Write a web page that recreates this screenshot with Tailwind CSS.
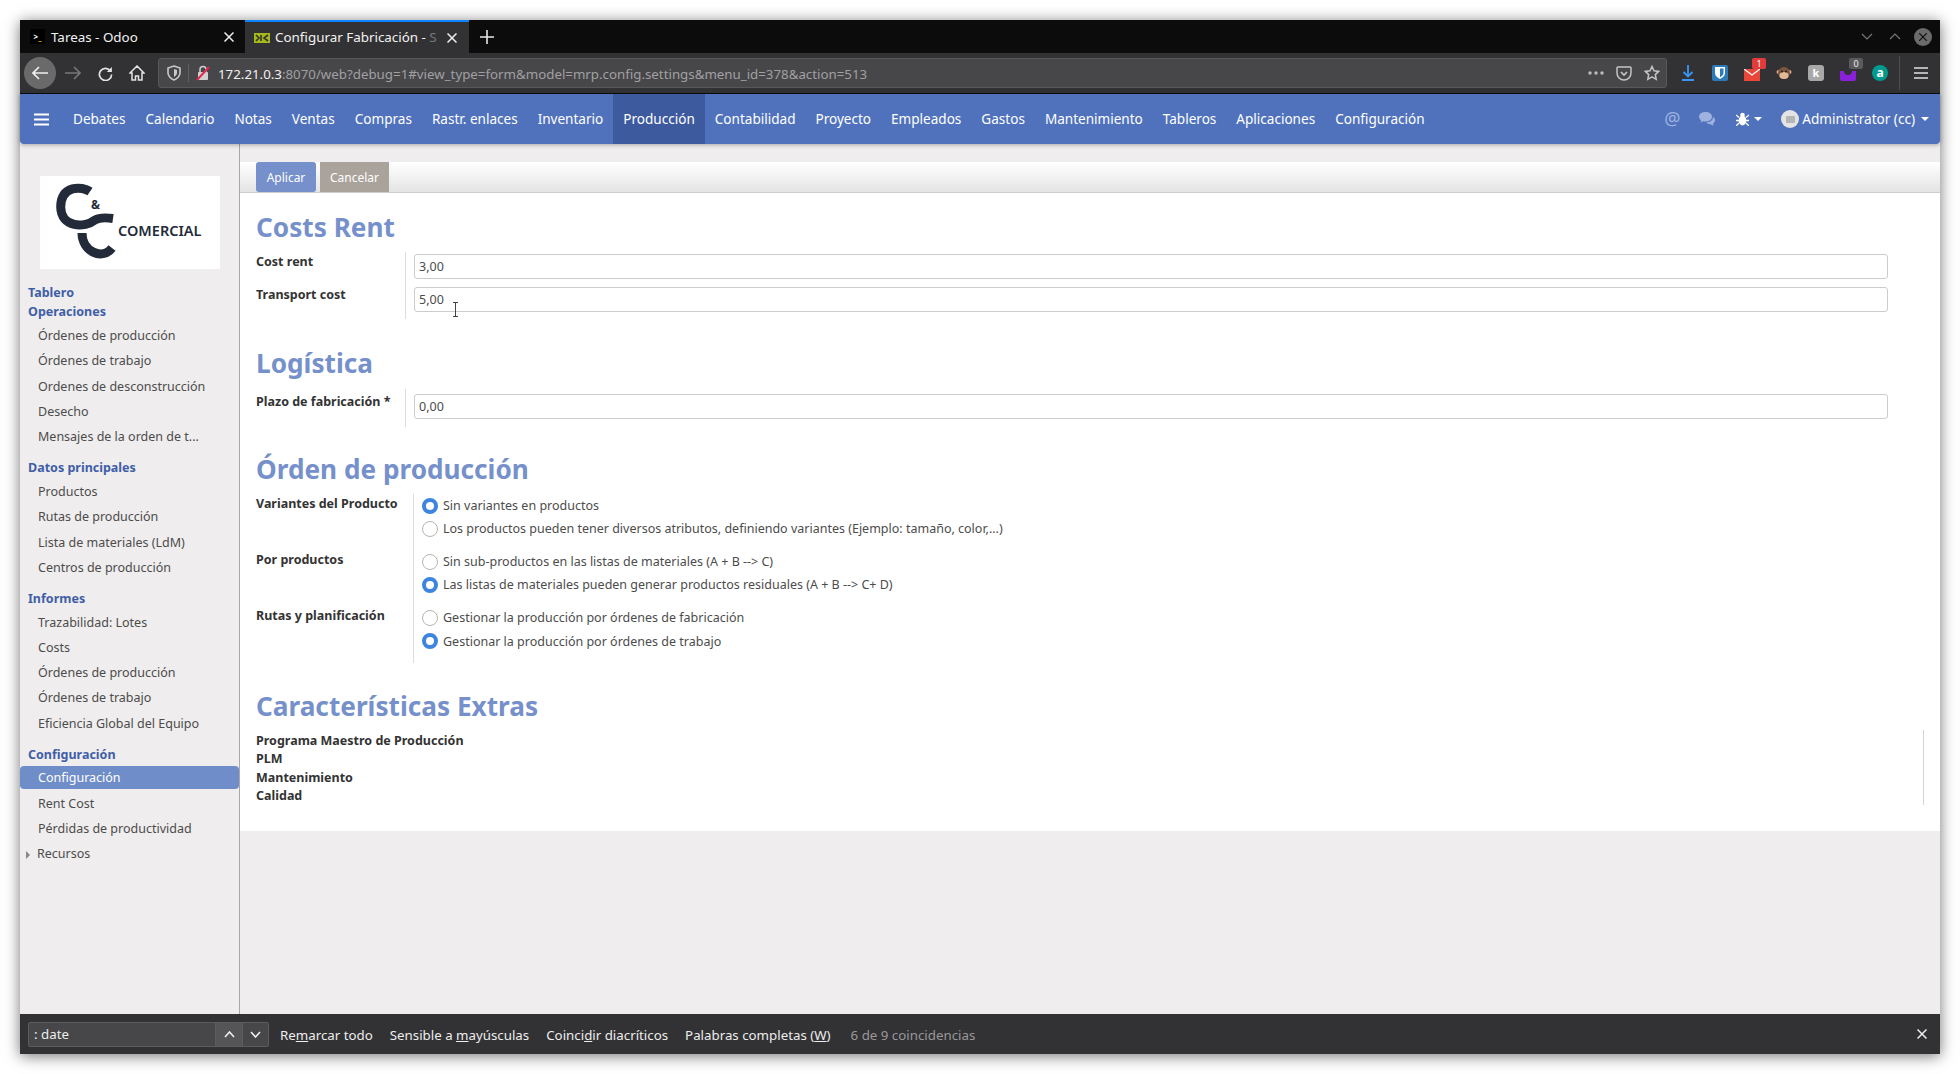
<!DOCTYPE html>
<html lang="es">
<head>
<meta charset="UTF-8">
<title>Configurar Fabricación</title>
<script src="https://cdn.jsdelivr.net/npm/@tailwindcss/browser@4"></script>
</head>
<body class="bg-white font-['Noto_Sans','Open_Sans',sans-serif] overflow-hidden">
<div class="w-[1960px] h-[1074px] p-[20px]">
<div class="w-[1920px] h-[1034px] flex flex-col shadow-[0_2px_14px_rgba(0,0,0,0.55)] relative">

  <!-- tab strip -->
  <div class="h-[33px] bg-[#0c0c0d] flex items-stretch text-[13.4px] text-[#f2f2f2] shrink-0">
    <div class="w-[225px] flex items-center pl-[10px] pr-[11px]">
      <span class="w-[15px] h-[15px] bg-black text-[8px] font-bold flex items-center justify-center text-white">&gt;<span class="text-[#e6c300]">_</span></span>
      <span class="ml-[6px] flex-1 pt-[2px]">Tareas - Odoo</span>
      <svg class="w-[10px] h-[10px]" viewBox="0 0 10 10"><path d="M.5.5l9 9M9.500.5l-9 9" stroke="#eee" stroke-width="1.500"/></svg>
    </div>
    <div class="w-[224px] bg-[#323234] border-t-2 border-[#0a84ff] flex items-center pl-[9px] pr-[12px] overflow-hidden">
      <svg class="w-[16px] h-[10px] shrink-0" viewBox="0 0 16 10"><rect width="16" height="10" fill="#a5b81c"/><path d="M2 2l3 3-3 3M7 2v6M14 2l-4 3 4 3" stroke="#323234" stroke-width="1.600" fill="none"/></svg>
      <span class="ml-[5px] flex-1 whitespace-nowrap overflow-hidden">Configurar Fabricación - <span class="text-[#77777a]">S</span></span>
      <svg class="w-[10px] h-[10px] ml-[4px] shrink-0" viewBox="0 0 10 10"><path d="M.5.5l9 9M9.500.5l-9 9" stroke="#eee" stroke-width="1.500"/></svg>
    </div>
    <div class="w-[36px] flex items-center justify-center">
      <svg class="w-[14px] h-[14px]" viewBox="0 0 14 14"><path d="M7 0v14M0 7h14" stroke="#e8e8e8" stroke-width="1.600"/></svg>
    </div>
    <div class="flex-1"></div>
    <div class="flex items-center pr-[8px]">
      <svg class="w-[12px] h-[7px] mr-[16px]" viewBox="0 0 12 7"><path d="M1 1l5 5 5-5" stroke="#777" fill="none" stroke-width="1.200"/></svg>
      <svg class="w-[12px] h-[7px] mr-[13px]" viewBox="0 0 12 7"><path d="M1 6l5-5 5 5" stroke="#777" fill="none" stroke-width="1.200"/></svg>
      <span class="w-[18px] h-[18px] rounded-full bg-[#6b6b6b] flex items-center justify-center">
        <svg class="w-[8px] h-[8px]" viewBox="0 0 8 8"><path d="M0 0l8 8M8 0l-8 8" stroke="#111" stroke-width="1.200"/></svg>
      </span>
    </div>
  </div>

  <!-- toolbar -->
  <div class="h-[41px] bg-[#323234] border-b border-[#0c0c0d] flex items-center shrink-0">
    <span class="ml-[4px] w-[32px] h-[32px] rounded-full bg-[#6a6a6b] flex items-center justify-center">
      <svg class="w-[16px] h-[14px]" viewBox="0 0 16 14"><path d="M7 1L1 7l6 6M1 7h15" stroke="#f0f0f0" stroke-width="1.700" fill="none"/></svg>
    </span>
    <svg class="ml-[9px] w-[16px] h-[14px]" viewBox="0 0 16 14"><path d="M9 1l6 6-6 6M15 7H0" stroke="#77777a" stroke-width="1.600" fill="none"/></svg>
    <svg class="ml-[17px] w-[15px] h-[15px]" viewBox="0 0 16 16"><path d="M13.500 5.500A6.500 6.500 0 1 0 14.500 9" stroke="#e4e4e4" stroke-width="1.800" fill="none"/><path d="M14.800 1v5.500H9.400z" fill="#e4e4e4"/></svg>
    <svg class="ml-[16px] w-[16px] h-[16px]" viewBox="0 0 16 16"><path d="M8 1L1 8h2v7h3.500v-4h3v4H13V8h2z" stroke="#e4e4e4" stroke-width="1.500" fill="none"/></svg>
    <!-- url bar -->
    <div class="ml-[13px] w-[1509px] h-[30px] bg-[#474749] rounded-[3px] border border-[#58585a] flex items-center text-[13.3px] shrink-0">
      <svg class="ml-[8px] w-[14px] h-[16px]" viewBox="0 0 14 16"><path d="M7 1l6 2v5c0 3-3 6-6 7-3-1-6-4-6-7V3z" stroke="#c8c8c8" stroke-width="1.600" fill="none"/><path d="M7 4l3 1v3c0 2-2 3-3 4z" fill="#c8c8c8"/></svg>
      <span class="ml-[7px] w-px h-[18px] bg-[#5e5e60]"></span>
      <svg class="ml-[7px] w-[14px] h-[16px]" viewBox="0 0 14 16"><rect x="2" y="7" width="10" height="8" rx="1" fill="#d0d0d0"/><path d="M4 7V4.500a3 3 0 0 1 6 0V7" stroke="#d0d0d0" stroke-width="1.500" fill="none"/><path d="M1 15L13 2" stroke="#e22850" stroke-width="2"/></svg>
      <span class="ml-[8px] pt-[3px] text-[#f0f0f0]">172.21.0.3<span class="text-[#a0a0a2]">:8070/web?debug=1#view_type=form&amp;model=mrp.config.settings&amp;menu_id=378&amp;action=513</span></span>
      <span class="flex-1"></span>
      <svg class="w-[16px] h-[4px]" viewBox="0 0 16 4"><circle cx="2" cy="2" r="1.700" fill="#bdbdbd"/><circle cx="8" cy="2" r="1.700" fill="#bdbdbd"/><circle cx="14" cy="2" r="1.700" fill="#bdbdbd"/></svg>
      <svg class="ml-[12px] w-[16px] h-[15px]" viewBox="0 0 16 15"><path d="M2 1h12a1 1 0 0 1 1 1v5a7 7 0 0 1-14 0V2a1 1 0 0 1 1-1z" stroke="#c4c4c4" stroke-width="1.500" fill="none"/><path d="M5 6l3 3 3-3" stroke="#c4c4c4" stroke-width="1.700" fill="none"/></svg>
      <svg class="ml-[12px] mr-[6px] w-[16px] h-[16px]" viewBox="0 0 16 16"><path d="M8 1.500l2 4.300 4.700.6-3.400 3.200.9 4.700L8 11.900l-4.200 2.400.9-4.700L1.300 6.400l4.700-.6z" stroke="#c4c4c4" stroke-width="1.500" fill="none"/></svg>
    </div>
    <!-- extensions -->
    <div class="ml-[5px] flex items-center">
      <span class="w-[32px] h-[24px] flex items-center justify-center">
        <svg class="w-[14px] h-[16px]" viewBox="0 0 14 16"><path d="M7 0v11M2.500 7L7 11.500 11.500 7M1 15h12" stroke="#3a96f5" stroke-width="1.800" fill="none"/></svg>
      </span>
      <span class="w-[32px] h-[24px] flex items-center justify-center">
        <span class="w-[16px] h-[16px] rounded-[2px] bg-[#2c7ab8] flex items-center justify-center">
          <svg class="w-[10px] h-[12px]" viewBox="0 0 10 12"><path d="M0 0h10v6c0 3-3 5-5 6-2-1-5-3-5-6z" fill="#fff"/><path d="M5 1.500h3.500V6c0 2-2 3.500-3.500 4.200z" fill="#2c7ab8"/></svg>
        </span>
      </span>
      <span class="w-[32px] h-[24px] flex items-center justify-center relative">
        <svg class="w-[16px] h-[12px] mt-[3px]" viewBox="0 0 16 12"><rect width="16" height="12" fill="#e8473a"/><path d="M0 0l8 6 8-6" stroke="#fff" stroke-width="1.200" fill="none"/></svg>
        <span class="absolute left-[16px] -top-[3px] w-[14px] h-[11px] rounded-[2px] bg-[#e33b3b] text-white text-[9px] leading-[11px] text-center">1</span>
      </span>
      <span class="w-[32px] h-[24px] flex items-center justify-center">
        <svg class="w-[16px] h-[16px]" viewBox="0 0 16 16"><circle cx="2.500" cy="7" r="2" fill="#d8a783"/><circle cx="13.500" cy="7" r="2" fill="#d8a783"/><circle cx="8" cy="8" r="6" fill="#7d5640"/><ellipse cx="8" cy="10.500" rx="4.500" ry="3.500" fill="#e3b896"/><circle cx="6" cy="6.500" r="1.100" fill="#222"/><circle cx="10" cy="6.500" r="1.100" fill="#222"/></svg>
      </span>
      <span class="w-[32px] h-[24px] flex items-center justify-center">
        <span class="w-[16px] h-[16px] rounded-[3px] bg-[#a8a8a8] text-white text-[11px] font-bold leading-[16px] text-center">k</span>
      </span>
      <span class="w-[32px] h-[24px] flex items-center justify-center relative">
        <svg class="w-[16px] h-[10px] mt-[5px]" viewBox="0 0 16 10"><path d="M0 0h4a4 4 0 0 0 8 0h4v8a2 2 0 0 1-2 2H2a2 2 0 0 1-2-2z" fill="#8a20d8"/></svg>
        <span class="absolute left-[17px] -top-[3px] w-[14px] h-[11px] rounded-[2px] bg-[#5a5a5c] text-[#eee] text-[9px] leading-[11px] text-center">0</span>
      </span>
      <span class="w-[32px] h-[24px] flex items-center justify-center">
        <span class="w-[16px] h-[16px] rounded-full bg-[#009b8e] text-white text-[12px] font-bold leading-[15px] text-center">a</span>
      </span>
      <span class="ml-[3px] w-px h-[34px] bg-[#4e4e50]"></span>
      <svg class="ml-[14px] w-[14px] h-[12px]" viewBox="0 0 14 12"><path d="M0 1h14M0 6h14M0 11h14" stroke="#e0e0e0" stroke-width="1.700"/></svg>
    </div>
  </div>

  <!-- odoo navbar -->
  <nav class="h-[50px] bg-[#5072bd] rounded-b-[4px] flex items-stretch text-white text-[13.55px] shrink-0 relative z-10 shadow-[0_1px_4px_rgba(0,0,0,0.3)]">
    <div class="w-[43px] flex items-center pl-[14px]">
      <svg class="w-[15px] h-[13px]" viewBox="0 0 15 13"><path d="M0 1.500h15M0 6.500h15M0 11.500h15" stroke="#fff" stroke-width="2.200"/></svg>
    </div>
    <a class="px-[10px] flex items-center">Debates</a>
    <a class="px-[10px] flex items-center">Calendario</a>
    <a class="px-[10px] flex items-center">Notas</a>
    <a class="px-[10px] flex items-center">Ventas</a>
    <a class="px-[10px] flex items-center">Compras</a>
    <a class="px-[10px] flex items-center">Rastr. enlaces</a>
    <a class="px-[10px] flex items-center">Inventario</a>
    <a class="px-[10px] flex items-center bg-[#3d5a9f]">Producción</a>
    <a class="px-[10px] flex items-center">Contabilidad</a>
    <a class="px-[10px] flex items-center">Proyecto</a>
    <a class="px-[10px] flex items-center">Empleados</a>
    <a class="px-[10px] flex items-center">Gastos</a>
    <a class="px-[10px] flex items-center">Mantenimiento</a>
    <a class="px-[10px] flex items-center">Tableros</a>
    <a class="px-[10px] flex items-center">Aplicaciones</a>
    <a class="px-[10px] flex items-center">Configuración</a>
    <div class="flex-1"></div>
    <div class="flex items-center pr-[11px]">
      <span class="text-[#9db2df] text-[18px] mr-[19px] -mt-[2px]">@</span>
      <svg class="w-[17px] h-[14px] mr-[20px]" viewBox="0 0 17 14"><path d="M6.500 0C3 0 0 2 0 4.700c0 1.500.9 2.800 2.300 3.700L1.500 10.500l2.800-1.300c.7.200 1.500.3 2.200.3 3.600 0 6.500-2.100 6.500-4.800S10.100 0 6.500 0z" fill="#9db2df"/><path d="M14.300 4.500c.100 3.300-3 5.900-7 6 .9 1 2.500 1.700 4.200 1.700l3.200 1.600-.7-2.300c1.200-.8 2-2 2-3.300 0-1.500-.7-2.700-1.700-3.700z" fill="#9db2df"/></svg>
      <svg class="w-[13px] h-[14px]" viewBox="0 0 13 14"><ellipse cx="6.500" cy="8.500" rx="3.800" ry="5" fill="#fff"/><circle cx="6.500" cy="3" r="2.300" fill="#fff"/><path d="M0 3l3 2.500M13 3l-3 2.500M0 8.500h3M13 8.500h-3M0 14l3-3M13 14l-3-3" stroke="#fff" stroke-width="1.300"/></svg>
      <span class="ml-[5px] w-0 h-0 border-x-[4px] border-x-transparent border-t-[4px] border-t-white"></span>
      <span class="ml-[19px] w-[18px] h-[18px] rounded-full bg-[#e4e4e4] flex items-center justify-center">
        <span class="w-[9px] h-[7px] rounded-[1px] bg-[#b5b5b5]"></span>
      </span>
      <span class="ml-[3px]">Administrator (cc)</span>
      <span class="ml-[6px] w-0 h-0 border-x-[4px] border-x-transparent border-t-[4px] border-t-white"></span>
    </div>
  </nav>

  <!-- body -->
  <div class="flex-1 flex min-h-0 bg-[#efeded]">
    <aside class="w-[220px] border-r border-[#a8a8a8] shrink-0 text-[12.5px] text-[#4c4c4c]">
      <div class="h-[93px] w-[180px] bg-white ml-[20px] mt-[32px]">
        <svg class="w-[180px] h-[93px]" viewBox="0 0 180 93">
          <g stroke="#232b3a" stroke-width="9" fill="none">
            <path d="M50 15.500C42 10 21 9 20.700 31C21 52 45 52 55 44C60 41 66 41.500 73 42.500"/>
            <path d="M42 57C42 75 62 85 72 72"/>
          </g>
          <text x="51" y="33" font-size="12" font-weight="700" fill="#232b3a">&amp;</text>
          <text x="78" y="60" font-size="14.500" font-weight="600" fill="#232b3a">COMERCIAL</text>
        </svg>
      </div>
      <div class="mt-[15px]">
        <div class="h-[19px] pl-[8px] flex items-center font-bold text-[#3f5ea8]">Tablero</div>
        <div class="h-[19px] pl-[8px] flex items-center font-bold text-[#3f5ea8]">Operaciones</div>
        <div class="h-[25.2px] pl-[18px] flex items-center mt-[2px]">Órdenes de producción</div>
        <div class="h-[25.2px] pl-[18px] flex items-center">Órdenes de trabajo</div>
        <div class="h-[25.2px] pl-[18px] flex items-center">Ordenes de desconstrucción</div>
        <div class="h-[25.2px] pl-[18px] flex items-center">Desecho</div>
        <div class="h-[25.2px] pl-[18px] flex items-center">Mensajes de la orden de t...</div>
        <div class="h-[19px] pl-[8px] flex items-center font-bold text-[#3f5ea8] mt-[9px]">Datos principales</div>
        <div class="h-[25.2px] pl-[18px] flex items-center mt-[2px]">Productos</div>
        <div class="h-[25.2px] pl-[18px] flex items-center">Rutas de producción</div>
        <div class="h-[25.2px] pl-[18px] flex items-center">Lista de materiales (LdM)</div>
        <div class="h-[25.2px] pl-[18px] flex items-center">Centros de producción</div>
        <div class="h-[19px] pl-[8px] flex items-center font-bold text-[#3f5ea8] mt-[9px]">Informes</div>
        <div class="h-[25.2px] pl-[18px] flex items-center mt-[2px]">Trazabilidad: Lotes</div>
        <div class="h-[25.2px] pl-[18px] flex items-center">Costs</div>
        <div class="h-[25.2px] pl-[18px] flex items-center">Órdenes de producción</div>
        <div class="h-[25.2px] pl-[18px] flex items-center">Órdenes de trabajo</div>
        <div class="h-[25.2px] pl-[18px] flex items-center">Eficiencia Global del Equipo</div>
        <div class="h-[19px] pl-[8px] flex items-center font-bold text-[#3f5ea8] mt-[9px]">Configuración</div>
        <div class="h-[23.2px] pl-[18px] pt-[2px] flex items-center mt-[1px] mb-[3px] bg-[#6f8dc9] text-white rounded-[4px]">Configuración</div>
        <div class="h-[25.2px] pl-[18px] flex items-center">Rent Cost</div>
        <div class="h-[25.2px] pl-[18px] flex items-center">Pérdidas de productividad</div>
        <div class="h-[25.2px] pl-[6px] flex items-center"><span class="w-0 h-0 border-y-[4px] border-y-transparent border-l-[4px] border-l-[#888] mr-[7px]"></span>Recursos</div>
      </div>
    </aside>

    <main class="flex-1 min-w-0 pt-[18px] relative">
      <!-- control panel -->
      <div class="h-[31px] border-b border-[#cccccc] bg-gradient-to-b from-white to-[#e4e4e4] pl-[16px] flex items-end text-[12px] text-white">
        <span class="w-[60px] h-[30px] bg-[#7590cb] rounded-[3px] flex items-center justify-center pt-[2px]">Aplicar</span>
        <span class="ml-[4px] w-[69px] h-[30px] bg-[#aaa39c] flex items-center justify-center pt-[2px]">Cancelar</span>
      </div>
      <!-- form sheet -->
      <div class="h-[638px] bg-white pl-[16px] text-[12.5px] text-[#4c4c4c] relative">
        <h2 class="pt-[17px] text-[26.2px] leading-[34px] font-bold text-[#7590cb]">Costs Rent</h2>
        <div class="mt-[8px] flex">
          <div class="w-[149px] font-bold text-[#333] pt-[1px]">
            <div class="h-[33px]">Cost rent</div>
            <div>Transport cost</div>
          </div>
          <div class="border-l border-[#ddd] pl-[8px] w-[1483px] h-[67px] pt-[2px]">
            <div class="h-[25px] border border-[#ccc] rounded-[3px] pl-[4px] pt-[2px] flex items-center">3,00</div>
            <div class="mt-[8px] h-[25px] border border-[#ccc] rounded-[3px] pl-[4px] pt-[2px] flex items-center">5,00</div>
          </div>
        </div>
        <h2 class="mt-[27px] text-[26.2px] leading-[34px] font-bold text-[#7590cb]">Logística</h2>
        <div class="mt-[9px] flex">
          <div class="w-[149px] font-bold text-[#333] pt-[4px]">Plazo de fabricación *</div>
          <div class="border-l border-[#ddd] pl-[8px] w-[1483px] h-[38px] pt-[5px]">
            <div class="h-[25px] border border-[#ccc] rounded-[3px] pl-[4px] pt-[2px] flex items-center">0,00</div>
          </div>
        </div>
        <h2 class="mt-[25px] text-[26.2px] leading-[34px] font-bold text-[#7590cb]">Órden de producción</h2>
        <div class="mt-[8px] flex">
          <div class="w-[157px] font-bold text-[#333] pt-[1px]">
            <div class="h-[56px]">Variantes del Producto</div>
            <div class="h-[56px]">Por productos</div>
            <div>Rutas y planificación</div>
          </div>
          <div class="border-l border-[#ddd] pl-[8px] h-[169px] pt-[1px]">
            <div class="h-[23px] flex items-center"><span class="w-[16px] h-[16px] -translate-y-[1px] rounded-full border-[4px] border-[#3d85e0] bg-white mr-[5px]"></span>Sin variantes en productos</div>
            <div class="h-[23px] flex items-center"><span class="w-[16px] h-[16px] -translate-y-[1px] rounded-full border border-[#b9b4ae] bg-white mr-[5px]"></span>Los productos pueden tener diversos atributos, definiendo variantes (Ejemplo: tamaño, color,...)</div>
            <div class="h-[10px]"></div>
            <div class="h-[23px] flex items-center"><span class="w-[16px] h-[16px] -translate-y-[1px] rounded-full border border-[#b9b4ae] bg-white mr-[5px]"></span>Sin sub-productos en las listas de materiales (A + B --&gt; C)</div>
            <div class="h-[23px] flex items-center"><span class="w-[16px] h-[16px] -translate-y-[1px] rounded-full border-[4px] border-[#3d85e0] bg-white mr-[5px]"></span>Las listas de materiales pueden generar productos residuales (A + B --&gt; C+ D)</div>
            <div class="h-[10px]"></div>
            <div class="h-[23px] flex items-center"><span class="w-[16px] h-[16px] -translate-y-[1px] rounded-full border border-[#b9b4ae] bg-white mr-[5px]"></span>Gestionar la producción por órdenes de fabricación</div>
            <div class="h-[24px] flex items-center"><span class="w-[16px] h-[16px] -translate-y-[1px] rounded-full border-[4px] border-[#3d85e0] bg-white mr-[5px]"></span>Gestionar la producción por órdenes de trabajo</div>
          </div>
        </div>
        <h2 class="mt-[26px] text-[26.2px] leading-[34px] font-bold text-[#7590cb]">Características Extras</h2>
        <div class="mt-[9px] font-bold text-[#333] leading-[18.4px]">
          <div>Programa Maestro de Producción</div>
          <div>PLM</div>
          <div>Mantenimiento</div>
          <div>Calidad</div>
        </div>
        <span class="absolute right-[16px] top-[537px] w-px h-[75px] bg-[#d4d4d4]"></span>
      </div>
      <svg class="absolute left-[212px] top-[158px] w-[7px] h-[15px]" viewBox="0 0 7 15"><path d="M1 .5h5M1 14.500h5M3.500 .5v14" stroke="#444" stroke-width="1"/></svg>
    </main>
  </div>

  <!-- find bar -->
  <div class="h-[40px] bg-[#323234] flex items-center text-[13.3px] text-[#ededed] shrink-0">
    <div class="ml-[8px] w-[241px] h-[25px] bg-[#474749] border border-[#5c5c5e] rounded-[2px] flex items-stretch">
      <span class="flex-1 pl-[5px] pt-[2px] flex items-center">: date</span>
      <span class="w-[27px] border-l border-[#5c5c5e] bg-[#555557] flex items-center justify-center">
        <svg class="w-[11px] h-[7px]" viewBox="0 0 11 7"><path d="M1 6l4.500-5 4.500 5" stroke="#eee" stroke-width="1.600" fill="none"/></svg>
      </span>
      <span class="w-[26px] border-l border-[#5c5c5e] flex items-center justify-center">
        <svg class="w-[11px] h-[7px]" viewBox="0 0 11 7"><path d="M1 1l4.500 5 4.500-5" stroke="#eee" stroke-width="1.600" fill="none"/></svg>
      </span>
    </div>
    <span class="ml-[11px] pt-[3px]">Re<span class="underline">m</span>arcar todo</span>
    <span class="ml-[17px] pt-[3px]">Sensible a <span class="underline">m</span>ayúsculas</span>
    <span class="ml-[17px] pt-[3px]">Coinci<span class="underline">d</span>ir diacríticos</span>
    <span class="ml-[17px] pt-[3px]">Palabras completas (<span class="underline">W</span>)</span>
    <span class="ml-[20px] pt-[3px] text-[#98989a]">6 de 9 coincidencias</span>
    <span class="flex-1"></span>
    <svg class="mr-[13px] w-[10px] h-[10px]" viewBox="0 0 10 10"><path d="M.5.5l9 9M9.500.5l-9 9" stroke="#eee" stroke-width="1.500"/></svg>
  </div>
</div>
</div>
</body>
</html>
